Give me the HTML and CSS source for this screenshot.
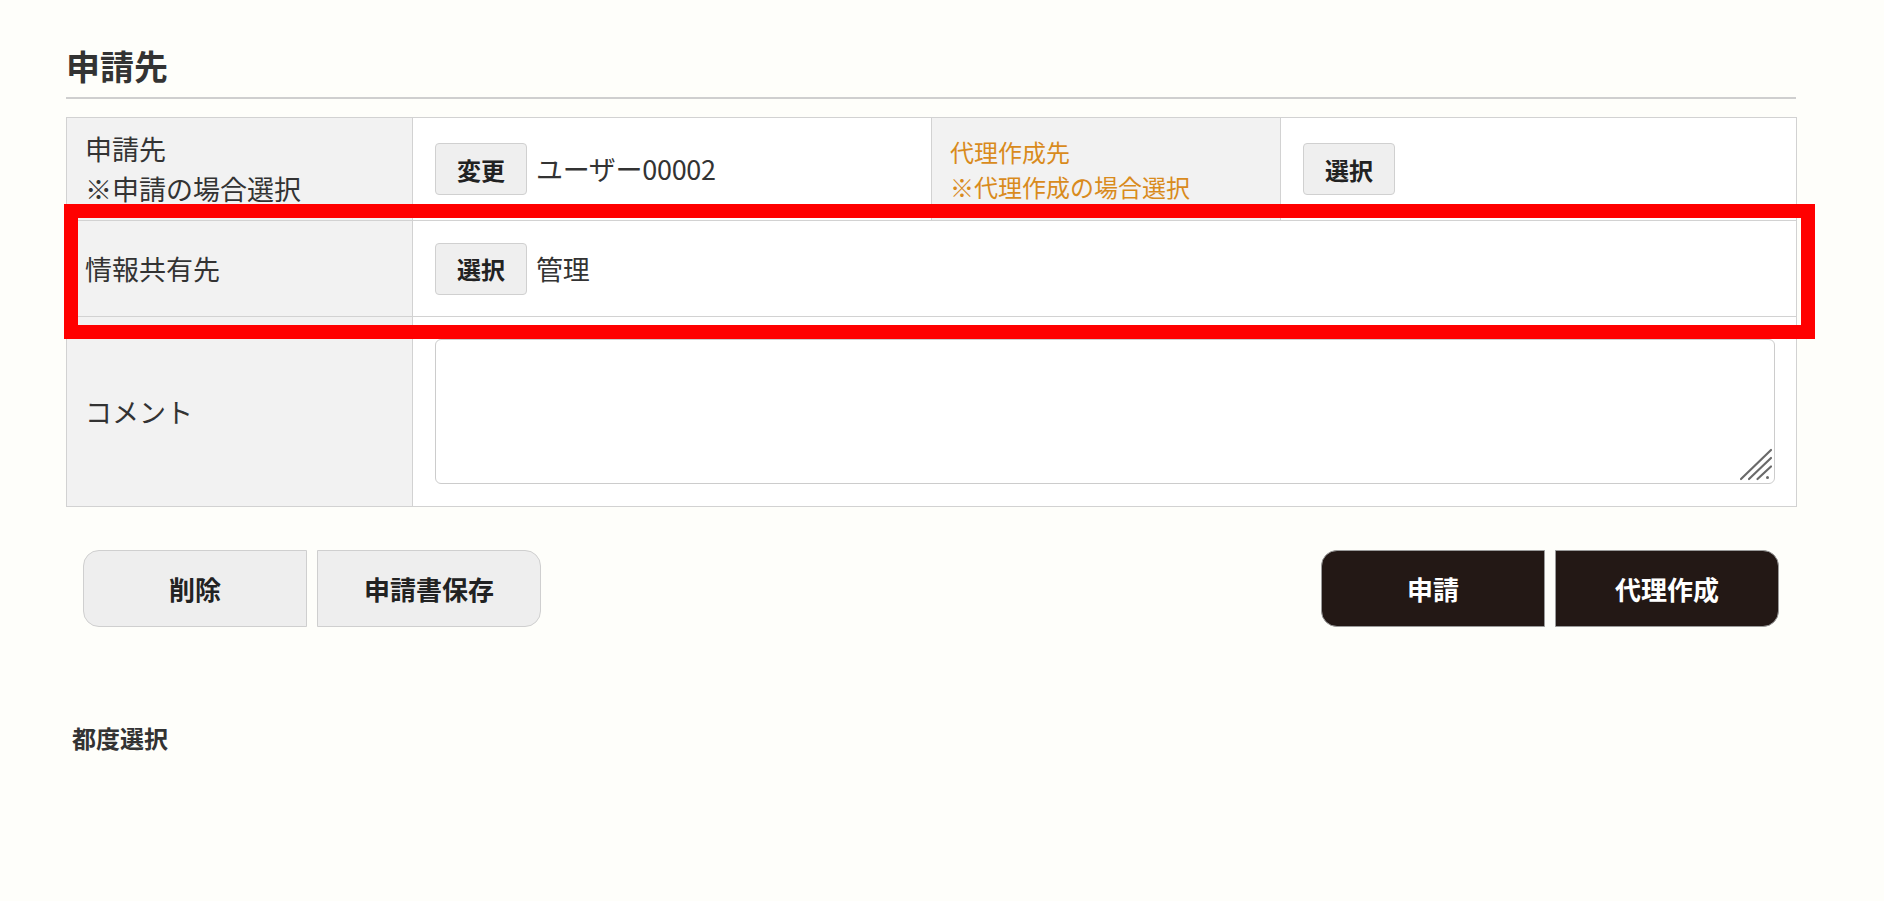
FILE: index.html
```html
<!DOCTYPE html>
<html lang="ja">
<head>
<meta charset="utf-8">
<title>申請先</title>
<link rel="stylesheet" href="styles.css">
</head>
<body>
<div class="page">
  <h2 class="title">申請先</h2>
  <div class="table-wrap">
    <table class="form-table">
      <colgroup>
        <col class="c1"><col class="c2"><col class="c3"><col class="c4">
      </colgroup>
      <tr class="row-1">
        <th>申請先<br>※申請の場合選択</th>
        <td><button class="btn-sm">変更</button><span class="val">ユーザー00002</span></td>
        <th class="orange">代理作成先<br>※代理作成の場合選択</th>
        <td class="c4cell"><button class="btn-sm">選択</button></td>
      </tr>
      <tr class="row-2">
        <th>情報共有先</th>
        <td colspan="3"><button class="btn-sm">選択</button><span class="val">管理</span></td>
      </tr>
      <tr class="row-3">
        <th>コメント</th>
        <td colspan="3" class="comment-cell">
          <div class="comment-box">
            <textarea class="comment"></textarea>
            <svg class="grip" width="34" height="34" viewBox="0 0 34 34">
              <path d="M2 31 L32 2 M10 31 L32 10 M18.5 31 L32 18.5" stroke="#6a6a6a" stroke-width="2.2" stroke-linecap="round" fill="none"/>
              <circle cx="28.5" cy="29.5" r="1.5" fill="#6a6a6a"/>
            </svg>
          </div>
        </td>
      </tr>
    </table>
    <div class="highlight"></div>
  </div>
  <div class="actions">
    <div class="group">
      <button class="btn-lg light left">削除</button>
      <button class="btn-lg light right">申請書保存</button>
    </div>
    <div class="group">
      <button class="btn-lg dark left">申請</button>
      <button class="btn-lg dark right">代理作成</button>
    </div>
  </div>
  <div class="sub-title">都度選択</div>
</div>
</body>
</html>
```

FILE: styles.css
```css
html, body {
  margin: 0;
  padding: 0;
  background: #fefefa;
}
body {
  font-family: "Noto Sans CJK JP", "Noto Sans", sans-serif;
  color: #333;
}
.page {
  width: 1730px;
  padding: 41px 0 0 66px;
}
.title {
  margin: 0;
  font-size: 34px;
  font-weight: 700;
  line-height: 50px;
  color: #333;
  padding-bottom: 6px;
  border-bottom: 2px solid #cfcfcf;
}
.table-wrap {
  position: relative;
  margin-top: 18px;
}
.form-table {
  width: 1730px;
  border-collapse: collapse;
  table-layout: fixed;
  border: 1px solid #d2d2d2;
}
.c1 { width: 346px; }
.c2 { width: 519px; }
.c3 { width: 349px; }
.c4 { width: 516px; }
.form-table th,
.form-table td {
  border: 1px solid #d2d2d2;
  vertical-align: middle;
  font-size: 27px;
  line-height: 40px;
}
.form-table th {
  background: #f2f2f2;
  font-weight: 400;
  text-align: left;
  padding: 0 18px;
  color: #333;
}
.form-table td {
  background: #fff;
  padding: 0 21px 0 22px;
}
.form-table th.orange {
  color: #d98b1d;
  font-size: 24px;
  line-height: 35px;
}
.row-1 { height: 103px; }
.row-2 { height: 96px; }
.row-3 { height: 190px; }
.btn-sm {
  width: 92px;
  height: 52px;
  background: #efefef;
  border: 1px solid #d0d0d0;
  border-radius: 4px;
  font-family: inherit;
  font-size: 24px;
  font-weight: 700;
  color: #222;
  padding: 0;
  vertical-align: middle;
}
.val {
  margin-left: 9px;
  vertical-align: middle;
  letter-spacing: -0.3px;
}
.comment-cell {
  padding-top: 22px;
  padding-bottom: 22px;
}
.comment-box {
  position: relative;
}
.comment {
  display: block;
  box-sizing: border-box;
  width: 100%;
  height: 145px;
  border: 1px solid #cccccc;
  border-radius: 6px;
  background: #fff;
  margin: 0;
  resize: none;
}
.grip {
  position: absolute;
  right: 2px;
  bottom: 2px;
  display: block;
}
.highlight {
  position: absolute;
  left: -2px;
  top: 87px;
  width: 1751px;
  height: 135px;
  box-sizing: border-box;
  border: 14px solid #ff0000;
  pointer-events: none;
}
.actions {
  display: flex;
  justify-content: space-between;
  padding: 0 17px;
  margin-top: 43px;
}
.group {
  display: flex;
  gap: 10px;
}
.btn-lg {
  width: 224px;
  height: 77px;
  font-family: inherit;
  font-size: 26px;
  font-weight: 700;
  padding: 0;
}
.btn-lg.light {
  background: #eeeeee;
  border: 1px solid #cfcfcf;
  color: #222;
}
.btn-lg.dark {
  background: #231815;
  border: 1px solid #9a9a9a;
  color: #fff;
}
.btn-lg.left {
  border-radius: 16px 0 0 16px;
}
.btn-lg.right {
  border-radius: 0 16px 16px 0;
}
.sub-title {
  margin-top: 93px;
  padding-left: 6px;
  font-size: 24px;
  font-weight: 700;
  line-height: 36px;
  color: #333;
}
```
